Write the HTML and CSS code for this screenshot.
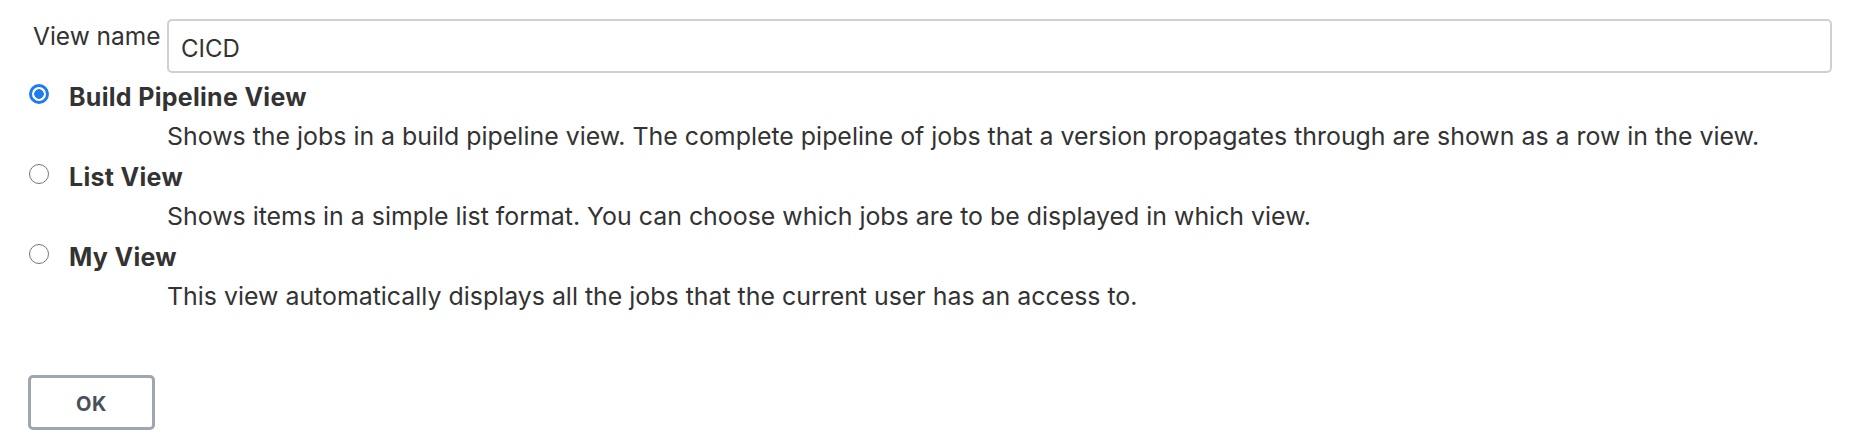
FILE: index.html
```html
<!DOCTYPE html>
<html>
<head>
<meta charset="utf-8">
<link rel="stylesheet" href="styles.css">
</head>
<body>
<form class="form">
  <div class="name-row">
    <label class="name-label" for="name">View name</label>
    <input class="name-input" id="name" type="text" value="CICD">
  </div>
  <div class="option">
    <label class="option-head">
      <input class="radio" type="radio" name="mode" checked>
      <span class="option-title">Build Pipeline View</span>
    </label>
    <div class="option-desc">Shows the jobs in a build pipeline view. The complete pipeline of jobs that a version propagates through are shown as a row in the view.</div>
  </div>
  <div class="option">
    <label class="option-head">
      <input class="radio" type="radio" name="mode">
      <span class="option-title">List View</span>
    </label>
    <div class="option-desc">Shows items in a simple list format. You can choose which jobs are to be displayed in which view.</div>
  </div>
  <div class="option">
    <label class="option-head">
      <input class="radio" type="radio" name="mode">
      <span class="option-title">My View</span>
    </label>
    <div class="option-desc">This view automatically displays all the jobs that the current user has an access to.</div>
  </div>
  <div class="actions">
    <button class="ok-btn" type="button">OK</button>
  </div>
</form>
</body>
</html>
```

FILE: styles.css
```css
html, body {
  margin: 0;
  padding: 0;
  background: #ffffff;
}
body {
  font-family: Inter, "Noto Sans", sans-serif;
  color: #333333;
}
.form {
  padding: 19px 18px 0 0;
}
.name-row {
  display: flex;
  align-items: flex-start;
  margin-bottom: 4px;
}
.name-label {
  width: 167px;
  flex: none;
  box-sizing: border-box;
  padding-left: 33px;
  padding-top: 2px;
  font-size: 24.5px;
  line-height: 30px;
  white-space: nowrap;
  color: #333333;
}
.name-input {
  flex: 1;
  min-width: 0;
  height: 54px;
  box-sizing: border-box;
  margin: 0;
  border: 2px solid #d0d0d0;
  border-radius: 5px;
  padding: 4px 12px 0 12px;
  font-family: Inter, "Noto Sans", sans-serif;
  font-size: 24px;
  color: #333333;
  outline: none;
}
.option {
  display: flex;
  flex-direction: column;
}
.option-head {
  display: flex;
  align-items: center;
  height: 39px;
  padding-left: 29px;
}
.radio {
  appearance: none;
  -webkit-appearance: none;
  width: 20px;
  height: 20px;
  margin: -6px 20px 0 0;
  box-sizing: border-box;
  border: 1.5px solid #767676;
  border-radius: 50%;
  background: #fff;
  flex: none;
}
.radio:checked {
  border: 3px solid #1f7bf2;
  background: radial-gradient(circle, #1f7bf2 0 4.5px, #ffffff 5px);
}
.option-title {
  font-weight: 700;
  font-size: 25px;
  letter-spacing: 0.3px;
  color: #333333;
}
.option-desc {
  height: 41px;
  line-height: 41px;
  padding-left: 167px;
  font-size: 24.9px;
  color: #333333;
  white-space: nowrap;
}
.actions {
  padding: 58px 0 0 28px;
}
.ok-btn {
  width: 127px;
  height: 55px;
  box-sizing: border-box;
  border: 3px solid #9ea7b0;
  border-radius: 5px;
  background: #ffffff;
  font-family: Inter, "Noto Sans", sans-serif;
  font-weight: 700;
  font-size: 20px;
  letter-spacing: 0.6px;
  color: #4a5058;
  padding: 2px 0 0 0;
}
```
